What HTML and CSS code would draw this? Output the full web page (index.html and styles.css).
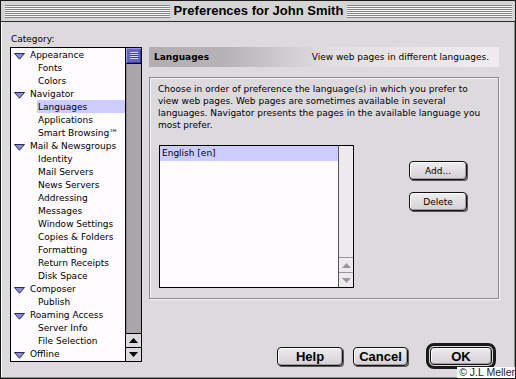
FILE: index.html
```html
<!DOCTYPE html>
<html lang="en">

<head>
  <meta charset="UTF-8">
  <meta name="viewport" content="width=device-width, initial-scale=1.0">
  <title>Preferences for John Smith</title>
  <link rel="stylesheet" href="styles.css">
</head>

<body>
  <div class="window">
    <div class="titlebar">
      <span class="stripes"></span>
      <h1>Preferences for John Smith</h1>
      <span class="stripes"></span>
    </div>

    <div class="main">
      <div class="sidebar">
        <div class="label">Category:</div>
        <div class="tree">
          <ul class="tree-list">
            <li class="top"><svg class="twisty" width="11" height="7" viewBox="0 0 11 7"><polygon points="0.5,0.5 10.5,0.5 5.5,6.2" /></svg>Appearance</li>
            <li class="child">Fonts</li>
            <li class="child">Colors</li>
            <li class="top"><svg class="twisty" width="11" height="7" viewBox="0 0 11 7"><polygon points="0.5,0.5 10.5,0.5 5.5,6.2" /></svg>Navigator</li>
            <li class="child sel">Languages</li>
            <li class="child">Applications</li>
            <li class="child">Smart Browsing™</li>
            <li class="top"><svg class="twisty" width="11" height="7" viewBox="0 0 11 7"><polygon points="0.5,0.5 10.5,0.5 5.5,6.2" /></svg>Mail &amp; Newsgroups</li>
            <li class="child">Identity</li>
            <li class="child">Mail Servers</li>
            <li class="child">News Servers</li>
            <li class="child">Addressing</li>
            <li class="child">Messages</li>
            <li class="child">Window Settings</li>
            <li class="child">Copies &amp; Folders</li>
            <li class="child">Formatting</li>
            <li class="child">Return Receipts</li>
            <li class="child">Disk Space</li>
            <li class="top"><svg class="twisty" width="11" height="7" viewBox="0 0 11 7"><polygon points="0.5,0.5 10.5,0.5 5.5,6.2" /></svg>Composer</li>
            <li class="child">Publish</li>
            <li class="top"><svg class="twisty" width="11" height="7" viewBox="0 0 11 7"><polygon points="0.5,0.5 10.5,0.5 5.5,6.2" /></svg>Roaming Access</li>
            <li class="child">Server Info</li>
            <li class="child">File Selection</li>
            <li class="top"><svg class="twisty" width="11" height="7" viewBox="0 0 11 7"><polygon points="0.5,0.5 10.5,0.5 5.5,6.2" /></svg>Offline</li>
          </ul>
          <div class="vscroll">
            <div class="thumb"><span class="grip"></span></div>
            <div class="track"></div>
            <div class="arrow"><svg width="9" height="5" viewBox="0 0 9 5"><polygon points="0,5 9,5 4.5,0" /></svg></div>
            <div class="arrow"><svg width="9" height="5" viewBox="0 0 9 5"><polygon points="0,0 9,0 4.5,5" /></svg></div>
          </div>
        </div>
      </div>

      <div class="pane">
        <div class="pane-head">
          <b>Languages</b>
          <span>View web pages in different languages.</span>
        </div>

        <div class="panel">
          <p>Choose in order of preference the language(s) in which you prefer to
            view web pages. Web pages are sometimes available in several
            languages. Navigator presents the pages in the available language you
            most prefer.</p>

          <div class="lang-row">
            <div class="listbox">
              <div class="list">
                <div class="item">English [en]</div>
              </div>
              <div class="list-scroll">
                <div class="arrow dim"><svg width="9" height="5" viewBox="0 0 9 5"><polygon points="0,5 9,5 4.5,0" /></svg></div>
                <div class="arrow dim"><svg width="9" height="5" viewBox="0 0 9 5"><polygon points="0,0 9,0 4.5,5" /></svg></div>
              </div>
            </div>
            <div class="side-btns">
              <button class="btn">Add...</button>
              <button class="btn">Delete</button>
            </div>
          </div>
        </div>

        <div class="actions">
          <button class="btn big help">Help</button>
          <button class="btn big cancel">Cancel</button>
          <div class="default-ring"><button class="btn big ok">OK</button></div>
        </div>
      </div>
    </div>

    <div class="credit">© J.L Meller</div>
  </div>
</body>

</html>
```

FILE: styles.css
```css
* {
  box-sizing: border-box;
}

body {
  margin: 0;
  background: #fff;
  font-family: "DejaVu Sans", sans-serif;
  font-size: 9px;
  color: #000;
}

.window {
  position: relative;
  width: 516px;
  height: 379px;
  border: 1px solid #1a1a1a;
  background: #dddade;
  box-shadow: inset -1px -1px 0 #8e8a8e, inset 1px 0 0 #fff;
  display: flex;
  flex-direction: column;
  overflow: hidden;
}

/* title bar */
.titlebar {
  height: 21px;
  flex: none;
  display: flex;
  align-items: center;
  gap: 4px;
  padding: 0 3px 0 4px;
  background: #d6d5d6;
  border-bottom: 1px solid #2a2a2a;
}

.stripes {
  flex: 1;
  height: 13px;
  background: repeating-linear-gradient(to bottom, #858585 0 1px, #f6f6f6 1px 2px);
}

.titlebar h1 {
  margin: 0;
  font-family: "Liberation Sans", Arial, sans-serif;
  font-size: 13px;
  font-weight: bold;
  line-height: 20px;
  white-space: nowrap;
}

.main {
  flex: 1;
  display: flex;
  padding: 11px 0 0 9px;
}

/* category tree */
.sidebar {
  width: 132px;
  display: flex;
  flex-direction: column;
}

.label {
  height: 14px;
  line-height: 12px;
  padding-left: 1px;
}

.tree {
  height: 315px;
  display: flex;
  border: 1px solid #000;
  background: #fdfbfd;
}

.tree-list {
  width: 114px;
  margin: 0;
  padding: 0;
  list-style: none;
  overflow: hidden;
}

.tree-list li {
  height: 13px;
  line-height: 15px;
  white-space: nowrap;
}

.tree-list .top {
  display: flex;
  align-items: flex-start;
  padding-left: 3px;
}

.twisty {
  margin-right: 5px;
  margin-top: 5px;
}

.twisty polygon {
  fill: #8a8ae0;
  stroke: #2a2a55;
  stroke-width: 1;
}

.tree-list .child {
  padding-left: 27px;
}

.tree-list .sel {
  margin-left: 26px;
  padding-left: 1px;
  background: #ccccff;
}

.vscroll {
  width: 16px;
  border-left: 1px solid #000;
  display: flex;
  flex-direction: column;
}

.thumb {
  height: 16px;
  background: #6464c8;
  border-bottom: 1px solid #000;
  box-shadow: inset 1px 1px 0 #9a9af0, inset -1px -1px 0 #3a3a90;
  display: flex;
  align-items: center;
  justify-content: center;
}

.grip {
  width: 8px;
  height: 7px;
  background: repeating-linear-gradient(to bottom, #d8d8ff 0 1px, #3a3a90 1px 2px);
}

.track {
  flex: 1;
  background: #a9a5a9;
  box-shadow: inset 1px 0 0 #8a868a;
}

.arrow {
  height: 14px;
  border-top: 1px solid #000;
  background: #dddade;
  display: flex;
  align-items: center;
  justify-content: center;
}

.arrow polygon {
  fill: #000;
}

/* right pane */
.pane {
  width: 350px;
  margin-left: 7px;
  padding-top: 14px;
  display: flex;
  flex-direction: column;
}

.pane-head {
  height: 20px;
  display: flex;
  justify-content: space-between;
  align-items: center;
  padding: 0 10px 0 5px;
  background: linear-gradient(to right, #b2aeb2 0%, #b6b2b6 22%, #e2dee2 52%, #efebef 100%);
}

.panel {
  margin-top: 10px;
  height: 222px;
  border: 1px solid #8c888c;
  box-shadow: inset 1px 1px 0 #f6f4f6, 1px 1px 0 #f6f4f6;
  padding: 5px 8px 0 8px;
}

.panel p {
  margin: 0;
  width: 330px;
  line-height: 12px;
}

.lang-row {
  display: flex;
  margin-top: 14px;
  padding-left: 1px;
}

.listbox {
  width: 195px;
  height: 143px;
  border: 1px solid #000;
  background: #fdfbfd;
  display: flex;
}

.list {
  flex: 1;
}

.item {
  height: 15px;
  line-height: 15px;
  padding-left: 2px;
  background: #ccccff;
}

.list-scroll {
  width: 15px;
  border-left: 1px solid #555;
  background: #eceaec;
  display: flex;
  flex-direction: column;
  justify-content: flex-end;
}

.arrow.dim {
  height: 15px;
  border-top: 1px solid #9a969a;
  background: #eceaec;
}

.arrow.dim polygon {
  fill: #9a969a;
}

.side-btns {
  margin-left: 55px;
  padding-top: 16px;
  display: flex;
  flex-direction: column;
  gap: 12px;
}

/* buttons */
.btn {
  width: 58px;
  height: 19px;
  padding: 0;
  border: 1px solid #111;
  border-radius: 4px;
  background: linear-gradient(#eeecee, #d4d0d4);
  box-shadow: 1px 1px 0 #5a565a, inset -1px -1px 0 #a29ea2, inset 1px 1px 0 #fff;
  font-family: "DejaVu Sans", sans-serif;
  font-size: 9px;
  color: #000;
}

.actions {
  margin-top: 44px;
  margin-right: 3px;
  display: flex;
  justify-content: flex-end;
  align-items: center;
}

.btn.big {
  height: 19px;
  font-family: "Liberation Sans", Arial, sans-serif;
  font-size: 13px;
  font-weight: bold;
}

.help {
  width: 66px;
  margin-right: 10px;
}

.cancel {
  width: 55px;
  margin-right: 18px;
}

.default-ring {
  width: 70px;
  height: 26px;
  padding: 1px;
  border: 3px solid #1a1a1a;
  border-radius: 8px;
}

.btn.ok {
  width: 62px;
  height: 18px;
  box-shadow: inset -1px -1px 0 #a29ea2, inset 1px 1px 0 #fff;
}

.credit {
  position: absolute;
  right: 0;
  bottom: 0;
  padding: 0 0 0 2px;
  background: #fff;
  font-family: "Liberation Sans", Arial, sans-serif;
  font-size: 10.5px;
  line-height: 11px;
  color: #222;
}
```
